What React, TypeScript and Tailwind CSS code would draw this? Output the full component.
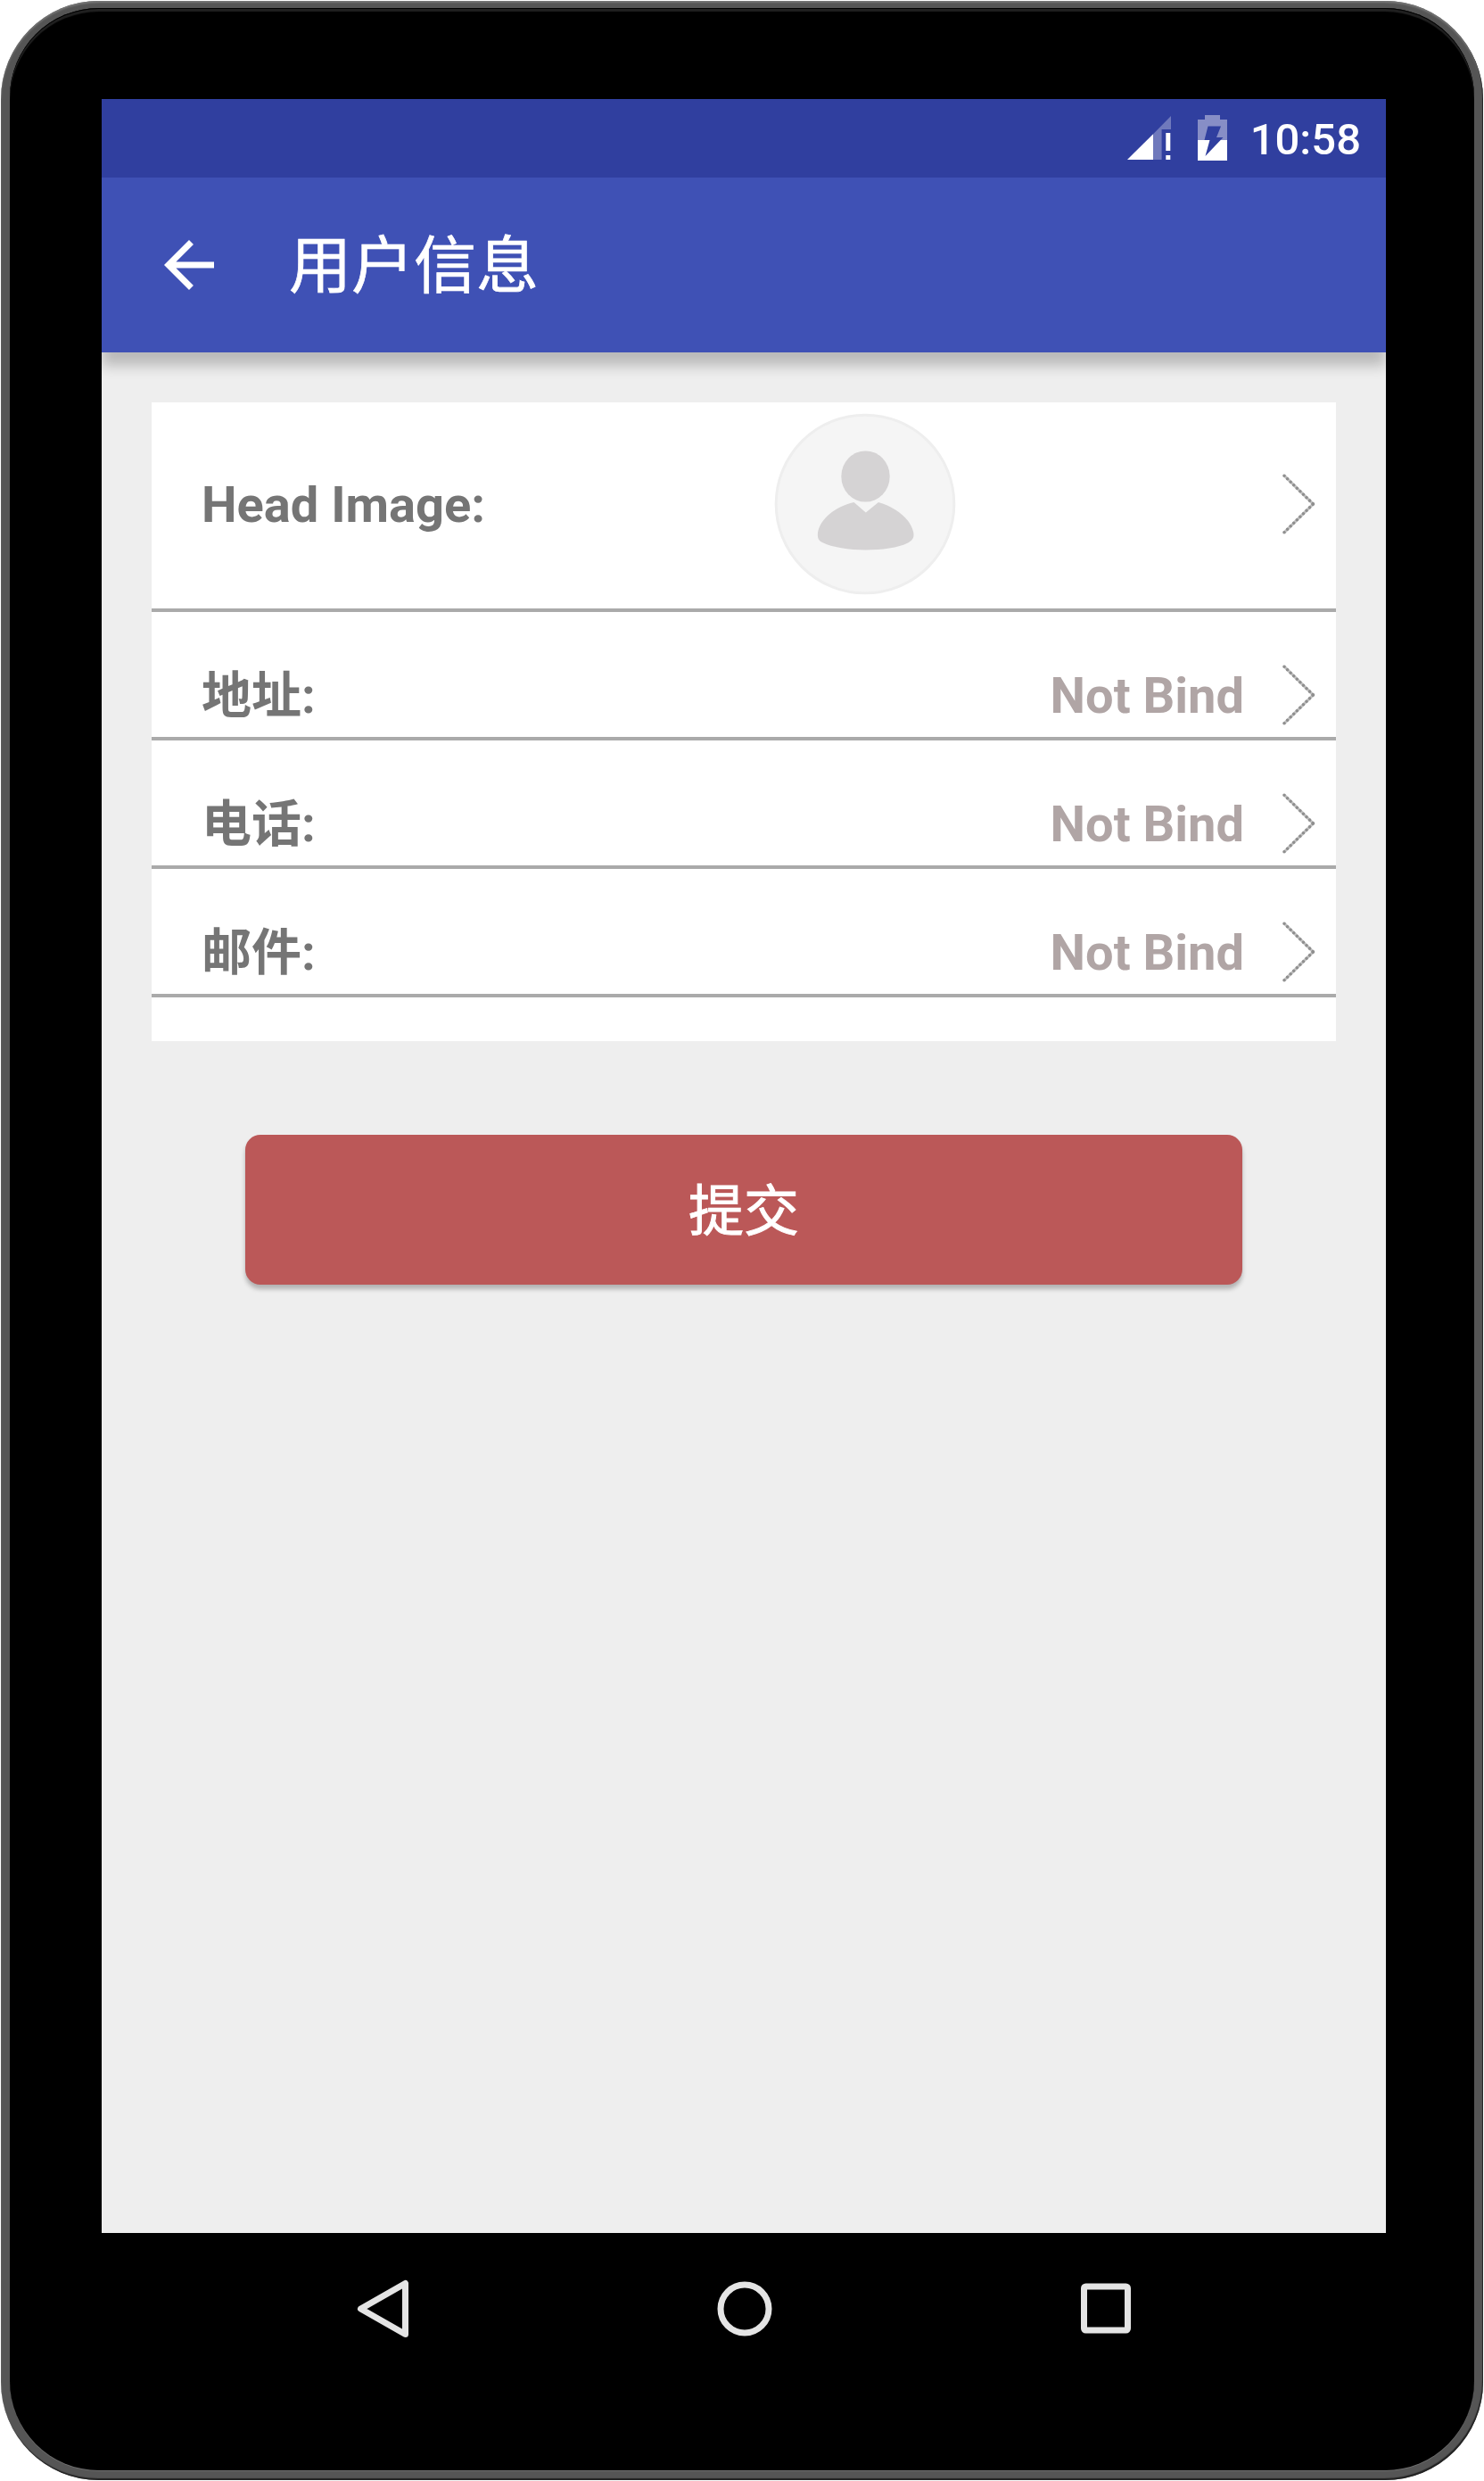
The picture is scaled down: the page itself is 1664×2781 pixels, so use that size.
import type { ReactNode } from "react";

function Chevron() {
  return (
    <svg width="40" height="72" viewBox="0 0 40 72" fill="none">
      <path d="M4 4.2 36.500 36 4 67.8" stroke="#c4c4c4" strokeWidth="3.2" />
      <path d="M4 4.2 36.500 36" stroke="#8f8f8f" strokeWidth="3.6" strokeLinecap="round" strokeDasharray="0 5" />
      <path d="M4 67.8 36.500 36" stroke="#8f8f8f" strokeWidth="3.6" strokeLinecap="round" strokeDasharray="0 5" />
    </svg>
  );
}

function Avatar() {
  return (
    <svg width="204" height="204" viewBox="0 0 204 204">
      <circle cx="102" cy="102" r="99.8" fill="#f5f5f5" stroke="#eeeeee" strokeWidth="3" />
      <ellipse cx="102.500" cy="71" rx="27.200" ry="28.600" fill="#d5d3d4" />
      <path
        d="M89.500 100 102.800 111.500 117 100C139 106.500 153.500 120 156.300 134C157 140 155.500 142 151 145C141 151 121 153.500 102.500 153.500C84 153.500 65 150.500 54 145C49.500 142.500 48.500 140 49 134C51.500 119 68 105 89.500 100Z"
        fill="#d5d3d4"
      />
    </svg>
  );
}

function StatusBar() {
  return (
    <div className="flex h-[88px] items-center justify-end bg-[#303f9f] pr-[28px] text-white">
      <svg className="mr-[30px]" width="49" height="52" viewBox="0 0 49 52">
        <path d="M0 50 29.300 21V50Z" fill="#fff" />
        <path d="M29.300 21 49 1V16H38.600V50H29.300Z" fill="#6f79bc" />
        <path d="M43.300 20H48.300V40H43.300ZM43.300 45H48.300V50H43.300Z" fill="#fff" />
      </svg>
      <svg className="mr-[26px]" width="33" height="52" viewBox="0 0 33 52">
        <path d="M8 0H25V5H33V29H0V5H8Z" fill="#878ec6" />
        <path d="M0 28H33V51H0Z" fill="#fff" />
        <path d="M11.500 12.500H26L21 25H28.500L8.500 46L13.500 28H7.500Z" fill="#303f9f" />
      </svg>
      <span className="pt-[3px] text-[49px] leading-none font-medium">10:58</span>
    </div>
  );
}

function Row({ label, children }: { label: string; children: ReactNode }) {
  return (
    <div className="flex h-[144px] items-center border-b-4 border-[#aaaaaa] pt-[46px] pr-[22px] pl-[56px]">
      <span className="flex-1 pt-px text-[56px] leading-none font-bold text-[#757575]">{label}</span>
      {children}
      <Chevron />
    </div>
  );
}

function NotBind() {
  return <span className="mr-[41px] pt-px text-[56px] leading-none font-bold text-[#b0a5a5]">Not Bind</span>;
}

function NavBar() {
  return (
    <div className="flex h-[169px] items-center justify-between pr-[279px] pl-[284px]">
      <svg width="62" height="70" viewBox="0 0 62 70" fill="none">
        <path d="M6.500 35 56.500 6.500V63.500Z" stroke="#e4e4e4" strokeWidth="7" strokeLinejoin="round" />
      </svg>
      <svg width="62" height="62" viewBox="0 0 62 62" fill="none">
        <circle cx="31" cy="31" r="27" stroke="#e4e4e4" strokeWidth="7" />
      </svg>
      <svg width="62" height="62" viewBox="0 0 62 62" fill="none">
        <rect x="6.500" y="6" width="49" height="49" rx="2" stroke="#e4e4e4" strokeWidth="7" />
      </svg>
    </div>
  );
}

export default function App() {
  return (
    <div className="h-[2781px] w-[1664px] bg-white p-px font-[Roboto,'Noto_Sans_CJK_SC',sans-serif]">
      <div className="h-[2779px] rounded-[110px] bg-[#555555] px-[10px] pt-[8px] pb-[11px] shadow-[inset_-1px_-2px_1px_#222222,inset_0_2px_2px_#777777]">
        <div className="h-[2760px] rounded-[100px] bg-black px-[103px] pt-[102px] shadow-[inset_0_1px_0_#000000,inset_0_4px_1px_#202020,0_1px_0_#6e6e6e]">
          <div className="h-[2392px] w-[1440px] bg-[#eeeeee]">
            <StatusBar />
            <header className="flex h-[196px] items-center bg-[#3f51b5] pl-[56px] text-white shadow-[0_15px_14px_rgba(0,0,0,0.22)] [clip-path:inset(0_0_-40px_0)]">
              <svg width="84" height="84" viewBox="0 0 24 24" fill="currentColor">
                <path d="M20 11H7.830l5.590-5.590L12 4l-8 8 8 8 1.410-1.410L7.830 13H20z" />
              </svg>
              <h1 className="ml-[70px] pt-[4px] text-[70px] leading-none [-webkit-text-stroke:0.7px_white]">用户信息</h1>
            </header>
            <main className="px-[56px] pt-[56px]">
              <section className="h-[716px] bg-white">
                <div className="flex h-[235px] items-center border-b-4 border-[#aaaaaa] pr-[22px] pb-[4px] pl-[56px]">
                  <span className="w-[472px] pt-[2px] text-[56px] leading-none font-bold text-[#757575]">Head Image:</span>
                  <div className="ml-[170px] flex-1">
                    <Avatar />
                  </div>
                  <Chevron />
                </div>
                <Row label="地址:"><NotBind /></Row>
                <Row label="电话:"><NotBind /></Row>
                <Row label="邮件:"><NotBind /></Row>
              </section>
              <button className="mx-[105px] mt-[105px] block h-[168px] w-[1118px] rounded-[17px] bg-[#bb5858] pt-[6px] text-[62px] leading-none text-white shadow-[0_5px_5px_rgba(0,0,0,0.25)] [-webkit-text-stroke:0.9px_white]">
                提交
              </button>
            </main>
          </div>
          <NavBar />
        </div>
      </div>
    </div>
  );
}
